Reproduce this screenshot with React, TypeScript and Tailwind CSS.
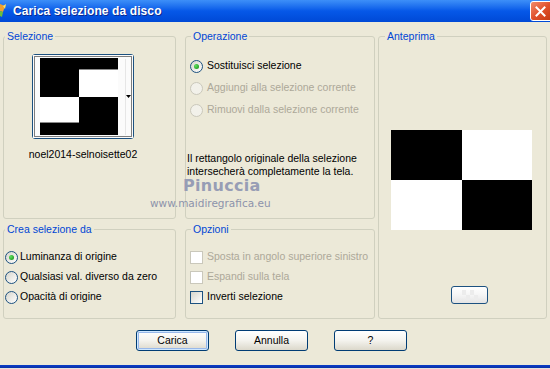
import type { ReactNode } from "react";

const Radio = ({ checked, disabled }: { checked?: boolean; disabled?: boolean }) => (
  <span
    className={`flex h-[13px] w-[13px] shrink-0 items-center justify-center rounded-full border ${
      disabled ? "border-[#cac8bb] bg-[#f2f1ea]" : "border-[#1c5180] bg-linear-to-br from-[#d6d5cc] to-white"
    }`}
  >
    {checked && <span className="h-[5px] w-[5px] rounded-full bg-[radial-gradient(circle_at_35%_35%,#5fe05f,#118a11)]" />}
  </span>
);

const Check = ({ disabled }: { disabled?: boolean }) => (
  <span
    className={`h-[13px] w-[13px] shrink-0 border ${
      disabled ? "border-[#cac8bb] bg-white" : "border-[#1c5180] bg-linear-to-br from-[#d6d5cc] to-white"
    }`}
  />
);

function Group({
  label,
  className,
  legendClass,
  children,
}: {
  label: string;
  className: string;
  legendClass: string;
  children: ReactNode;
}) {
  return (
    <fieldset className={`rounded-[3px] border border-[#d0d0bf] ${className}`}>
      <legend className={`px-[2px] leading-[13px] text-[#0046d5] ${legendClass}`}>{label}</legend>
      {children}
    </fieldset>
  );
}

function XpButton({ label, primary }: { label: string; primary?: boolean }) {
  return (
    <button
      className={`h-[21px] w-[73px] rounded-[3px] border border-[#003c74] bg-linear-to-b from-white via-[#f4f3ee] to-[#dcd8cb] leading-none ${
        primary ? "shadow-[inset_0_0_0_1px_#cee7ff,inset_0_0_0_2px_#98b8ea]" : ""
      }`}
    >
      {label}
    </button>
  );
}

export default function App() {
  return (
    <div className="relative h-[369px] w-[550px] overflow-hidden bg-[#ece9d8] font-['Liberation_Sans',Arial,sans-serif] text-[10.5px] text-black">
      {/* title bar */}
      <div className="flex h-[22px] items-center overflow-hidden bg-linear-to-b from-[#3d8ff8] via-[#0658e8] to-[#0049d6]">
        <svg width="8" height="18" viewBox="0 0 8 18" className="shrink-0">
          <path d="M0 2 L5 4 L3 10 L0 9 Z" fill="#f0a030" />
          <path d="M0 9 L3 10 L2 15 L0 14 Z" fill="#6bbf3a" />
          <path d="M3 4 L6 2 L5 7 Z" fill="#ffe060" />
        </svg>
        <span className="ml-[5px] text-[12px] font-bold tracking-[0.1px] text-white [text-shadow:1px_1px_0_#0a2a90]">
          Carica selezione da disco
        </span>
        <div className="ml-auto mr-[-3px] flex h-[20px] w-[23px] items-center justify-center rounded-[3px] border border-white bg-linear-to-br from-[#f08a6a] via-[#e0502a] to-[#c43a12]">
          <svg width="11" height="11" viewBox="0 0 11 11" className="-ml-[2px]">
            <path d="M1.5 1.5 L9.5 9.5 M9.5 1.5 L1.5 9.5" stroke="white" strokeWidth="2" strokeLinecap="square" />
          </svg>
        </div>
      </div>

      <div className="flex pl-[3px] pt-[8px]">
        <div className="flex w-[173px] flex-col gap-[4px]">
          <Group label="Selezione" className="h-[189px]" legendClass="ml-[1px]">
            <div className="ml-[19px] mt-[11px] flex w-[120px] flex-col items-center">
              <div className="h-[85px] w-[102px] rounded-[3px] border border-[#1c5180] bg-white">
                <svg width="100" height="83" viewBox="0 0 100 83">
                  <rect x="0" y="0" width="100" height="83" fill="#fbfbfb" />
                  <rect x="7" y="3" width="78" height="77" fill="white" />
                  <rect x="7" y="3" width="39" height="39" fill="black" />
                  <rect x="46" y="3" width="39" height="11" fill="black" />
                  <rect x="46" y="14" width="39" height="1" fill="#8a8a8a" />
                  <rect x="46" y="42" width="39" height="38" fill="black" />
                  <rect x="7" y="67" width="39" height="1" fill="#8a8a8a" />
                  <rect x="7" y="68" width="39" height="12" fill="black" />
                  <rect x="92" y="4" width="1" height="76" fill="#e6e6e6" />
                  <rect x="1.5" y="1.5" width="97" height="80" fill="none" stroke="black" strokeDasharray="1 1" />
                  <path d="M93 40 L98 40 L95.5 43 Z" fill="black" />
                </svg>
              </div>
              <div className="mt-[9px] leading-[13px]">noel2014-selnoisette02</div>
            </div>
          </Group>
          <Group label="Crea selezione da" className="h-[96px]" legendClass="ml-[1px]">
            <div className="ml-[1px] mt-[11px] flex flex-col">
              <div className="flex h-[20px] items-center gap-[2px]">
                <Radio checked />
                <span>Luminanza di origine</span>
              </div>
              <div className="flex h-[20px] items-center gap-[2px]">
                <Radio />
                <span>Qualsiasi val. diverso da zero</span>
              </div>
              <div className="flex h-[20px] items-center gap-[2px]">
                <Radio />
                <span>Opacità di origine</span>
              </div>
            </div>
          </Group>
        </div>

        <div className="ml-[9px] flex w-[190px] flex-col gap-[4px]">
          <Group label="Operazione" className="h-[189px]" legendClass="ml-[5px]">
            <div className="ml-[4px] mt-[12px] flex flex-col">
              <div className="flex h-[22px] items-center gap-[4px]">
                <Radio checked />
                <span>Sostituisci selezione</span>
              </div>
              <div className="flex h-[22px] items-center gap-[4px] text-[#aca899]">
                <Radio disabled />
                <span>Aggiungi alla selezione corrente</span>
              </div>
              <div className="flex h-[22px] items-center gap-[4px] text-[#aca899]">
                <Radio disabled />
                <span>Rimuovi dalla selezione corrente</span>
              </div>
            </div>
            <p className="ml-[1px] mt-[31px] leading-[13px]">
              Il rettangolo originale della selezione
              <br />
              intersecherà completamente la tela.
            </p>
          </Group>
          <Group label="Opzioni" className="h-[96px]" legendClass="ml-[5px]">
            <div className="ml-[4px] mt-[11px] flex flex-col">
              <div className="flex h-[20px] items-center gap-[4px] text-[#aca899]">
                <Check disabled />
                <span>Sposta in angolo superiore sinistro</span>
              </div>
              <div className="flex h-[20px] items-center gap-[4px] text-[#aca899]">
                <Check disabled />
                <span>Espandi sulla tela</span>
              </div>
              <div className="flex h-[20px] items-center gap-[4px]">
                <Check />
                <span>Inverti selezione</span>
              </div>
            </div>
          </Group>
        </div>

        <div className="ml-[3px] w-[169px]">
          <Group label="Anteprima" className="h-[289px]" legendClass="ml-[6px]">
            <svg width="141" height="100" viewBox="0 0 141 100" className="ml-[12px] mt-[87px] block">
              <rect x="0" y="0" width="71" height="50" fill="black" />
              <rect x="71" y="0" width="70" height="50" fill="white" />
              <rect x="0" y="50" width="71" height="50" fill="white" />
              <rect x="71" y="50" width="70" height="50" fill="black" />
            </svg>
            <div className="ml-[72px] mt-[56px] flex h-[18px] w-[37px] items-center justify-center rounded-[3px] border border-[#1c5180] bg-linear-to-b from-white via-[#f5f5f5] to-[#e4e4e4]">
              <svg width="16" height="10" viewBox="0 0 16 10">
                <rect x="0" y="0" width="4" height="5" fill="#ececec" />
                <rect x="8" y="0" width="4" height="5" fill="#ececec" />
                <rect x="4" y="5" width="4" height="5" fill="#ececec" />
                <rect x="12" y="5" width="4" height="5" fill="#ececec" />
              </svg>
            </div>
          </Group>
        </div>
      </div>

      <div className="mt-[11px] flex gap-[26px] pl-[136px]">
        <XpButton label="Carica" primary />
        <XpButton label="Annulla" />
        <XpButton label="?" />
      </div>

      <div className="mt-[14px] h-[3px] bg-linear-to-b from-[#0a3ec8] to-[#0a2fa8]" />
      <div className="h-[1px] bg-[#e4e2dc]" />

      {/* watermark */}
      <div className="absolute left-[183px] top-[178px] font-['DejaVu_Sans',sans-serif] text-[16px] font-semibold leading-[16px] tracking-[0.3px] text-[#979db5]">
        Pinuccia
      </div>
      <div className="absolute left-[150px] top-[197px] font-['DejaVu_Sans',sans-serif] text-[10.5px] leading-[12px] text-[#8d93ab]">
        www.maidiregrafica.eu
      </div>
    </div>
  );
}
